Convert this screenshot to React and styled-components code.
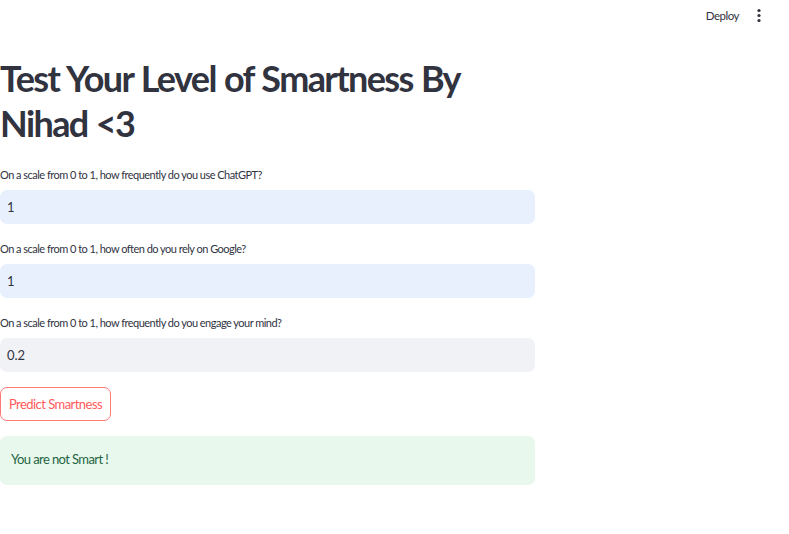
import React from "react";
import styled, { createGlobalStyle } from "styled-components";

const Global = createGlobalStyle`
  html, body { margin: 0; padding: 0; background: #fff; }
  body { font-family: "Lato", "Noto Sans", sans-serif; color: rgb(49, 51, 63); }
`;

const Page = styled.div`
  width: 789px;
  height: 534px;
  display: flex;
  flex-direction: column;
  overflow: hidden;
`;

const Header = styled.header`
  height: 32px;
  display: flex;
  align-items: center;
  justify-content: flex-end;
  gap: 12px;
  padding-right: 22px;
`;

const HeaderButton = styled.span`
  font-size: 11.5px;
  line-height: 14px;
  margin-top: -1px;
  color: rgb(49, 51, 63);
  letter-spacing: -0.5px;
`;

const Kebab = styled.svg`
  width: 16px;
  height: 16px;
  display: block;
`;

const Main = styled.main`
  width: 535px;
  display: flex;
  flex-direction: column;
`;

const Title = styled.h1`
  margin: 24px 0 0;
  font-size: 36px;
  line-height: 45px;
  font-weight: 700;
  letter-spacing: -1.6px;
  word-spacing: 1px;
  color: rgb(49, 51, 63);
`;

const Field = styled.div`
  display: flex;
  flex-direction: column;
  gap: 8px;
  margin-top: ${(p) => p.$top}px;
`;

const Label = styled.label`
  font-size: 11px;
  line-height: 14px;
  color: rgb(49, 51, 63);
  letter-spacing: -0.52px;
`;

const Input = styled.div`
  height: 34px;
  border-radius: 7px;
  background: ${(p) => (p.$autofill ? "rgb(232, 240, 254)" : "rgb(240, 242, 246)")};
  display: flex;
  align-items: center;
  padding-left: 7px;
  font-size: 13px;
  color: rgb(49, 51, 63);
`;

const Button = styled.button`
  align-self: flex-start;
  margin-top: 15px;
  height: 34px;
  width: 111px;
  padding: 0;
  border: 1px solid rgb(255, 120, 120);
  border-radius: 7px;
  background: #fff;
  color: rgb(255, 90, 90);
  font-family: inherit;
  font-size: 13px;
  letter-spacing: -0.55px;
`;

const Alert = styled.div`
  margin-top: 15px;
  height: 49px;
  border-radius: 7px;
  background: rgb(232, 248, 237);
  display: flex;
  align-items: center;
  padding-left: 11px;
  padding-bottom: 3px;
  box-sizing: border-box;
  font-size: 13px;
  color: rgb(31, 100, 66);
  letter-spacing: -0.6px;
`;

const questions = [
  { label: "On a scale from 0 to 1, how frequently do you use ChatGPT?", value: "1", autofill: true, top: 22 },
  { label: "On a scale from 0 to 1, how often do you rely on Google?", value: "1", autofill: true, top: 18 },
  { label: "On a scale from 0 to 1, how frequently do you engage your mind?", value: "0.2", autofill: false, top: 18 },
];

export default function App() {
  return (
    <Page>
      <Global />
      <Header>
        <HeaderButton>Deploy</HeaderButton>
        <Kebab viewBox="0 0 16 16">
          <circle cx="8" cy="2.5" r="1.6" fill="rgb(49,51,63)" />
          <circle cx="8" cy="7.5" r="1.6" fill="rgb(49,51,63)" />
          <circle cx="8" cy="12.5" r="1.6" fill="rgb(49,51,63)" />
        </Kebab>
      </Header>
      <Main>
        <Title>
          Test Your Level of Smartness By
          <br />
          Nihad &lt;3
        </Title>
        {questions.map((q) => (
          <Field key={q.label} $top={q.top}>
            <Label>{q.label}</Label>
            <Input $autofill={q.autofill}>{q.value}</Input>
          </Field>
        ))}
        <Button>Predict Smartness</Button>
        <Alert>You are not Smart !</Alert>
      </Main>
    </Page>
  );
}
